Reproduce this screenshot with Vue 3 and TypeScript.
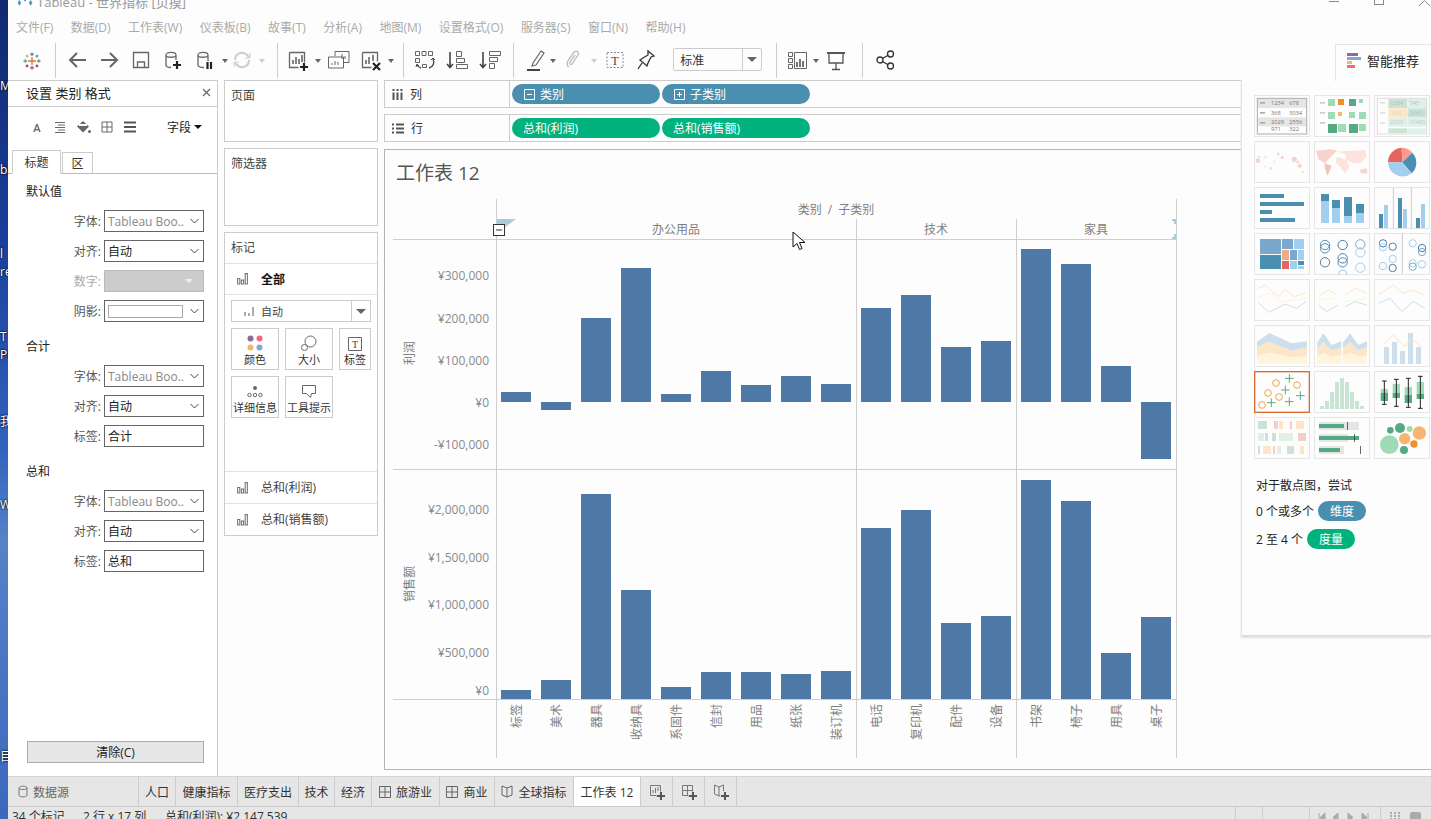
<script setup lang="ts">
type Shape = { tag: string; attrs: Record<string, string | number>; text?: string }
type Thumb = { x: number; y: number; shapes: Shape[]; selected?: boolean }

const r = (x: number, y: number, width: number, height: number, fill: string): Shape => ({ tag: 'rect', attrs: { x, y, width, height, fill } })
const c = (cx: number, cy: number, rad: number, fill: string, stroke = 'none', sw = 3): Shape => ({ tag: 'circle', attrs: { cx, cy, r: rad, fill, stroke, 'stroke-width': sw } })
const pl = (points: string, stroke: string, sw = 3): Shape => ({ tag: 'polyline', attrs: { points, fill: 'none', stroke, 'stroke-width': sw } })
const pg = (points: string, fill: string): Shape => ({ tag: 'polygon', attrs: { points, fill } })
const p = (d: string, fill: string): Shape => ({ tag: 'path', attrs: { d, fill } })
const tx = (x: number, y: number, text: string, fill: string): Shape => ({ tag: 'text', attrs: { x, y, fill, 'font-size': 17 }, text })
const ln = (x1: number, y1: number, x2: number, y2: number, stroke: string, sw = 3): Shape => ({ tag: 'line', attrs: { x1, y1, x2, y2, stroke, 'stroke-width': sw } })

const D = '#4b8fb0', L = '#a3cfef', M = '#7aa8cc', G = '#54ab83', LG = '#9fdcb5', PG = '#c9e3d5', PPG = '#dff0e6', PE = '#fde5c8', PK = '#f5cfc5', BL = '#cddfec', YL = '#fff4dc'
const plus = (x: number, y: number) => [ln(x - 13, y, x + 13, y, G), ln(x, y - 13, x, y + 13, G)]
const whisk = (x: number, t: number, b: number, bt: number, bm: number, bb: number) => [
  r(x - 11, bt, 22, bm - bt, LG), r(x - 11, bm, 22, bb - bm, G), ln(x, t, x, b, '#222'), ln(x - 7, t, x + 7, t, '#222'), ln(x - 7, b, x + 7, b, '#222')
]

const thumbs: Thumb[] = [
  { x: 72, y: 285, shapes: [r(84, 297, 144, 27, '#e5e5e5'), r(84, 352, 144, 27, '#e5e5e5'), r(90, 306, 15, 5, '#aaa'), r(90, 336, 15, 5, '#aaa'), r(90, 366, 15, 5, '#aaa'),
    tx(123, 316, '1234', '#777'), tx(178, 316, '678', '#777'), tx(123, 344, '368', '#777'), tx(178, 344, '3034', '#777'), tx(123, 372, '2029', '#777'), tx(178, 372, '2556', '#777'), tx(123, 394, '971', '#777'), tx(178, 394, '322', '#777'),
    { tag: 'rect', attrs: { x: 82, y: 295, width: 148, height: 107, fill: 'none', stroke: '#aaa', 'stroke-width': 3 } }] },
  { x: 252, y: 285, shapes: [r(270, 306, 15, 5, '#ccc'), r(270, 336, 15, 5, '#ccc'), r(270, 366, 15, 5, '#ccc'),
    r(294, 297, 21, 21, LG), r(324, 297, 18, 18, '#f28e2b'), r(357, 297, 21, 21, G), r(387, 297, 12, 12, LG),
    r(294, 336, 21, 21, LG), r(324, 336, 12, 12, '#f9b56f'), r(357, 336, 18, 18, LG), r(387, 336, 21, 21, LG),
    r(294, 372, 27, 27, G), r(324, 372, 24, 24, LG), r(357, 372, 27, 27, G), r(387, 372, 21, 21, LG)] },
  { x: 432, y: 285, shapes: [r(475, 297, 57, 27, PG), r(533, 297, 57, 27, PPG), r(475, 325, 57, 27, PE), r(533, 325, 57, 27, PG), r(475, 353, 57, 27, PPG), r(533, 353, 57, 27, PPG), r(475, 385, 57, 14, PG), r(533, 385, 57, 14, PPG),
    r(450, 306, 15, 5, '#e0e0e0'), r(450, 336, 15, 5, '#e0e0e0'), r(450, 366, 15, 5, '#e0e0e0'),
    tx(481, 316, '1234', '#bbb'), tx(539, 316, '345', '#bbd'), tx(486, 344, '345', '#ddb'), tx(539, 344, '2860', '#bbb'), tx(481, 372, '2020', '#bcd'), tx(537, 372, '10480', '#bcd'),
    { tag: 'rect', attrs: { x: 442, y: 295, width: 148, height: 107, fill: 'none', stroke: '#ddd', 'stroke-width': 3 } }] },
  { x: 72, y: 423, shapes: [c(84, 482, 7, '#f6d3cb'), c(87, 470, 3, '#f6d3cb'), c(107, 472, 4, '#f9e0da'), c(145, 462, 4, '#f6d3cb'), c(157, 472, 5, '#f6d3cb'), c(133, 485, 3, '#f9e0da'), c(193, 478, 8, '#f6d3cb'), c(203, 486, 4, '#f6d3cb'), c(209, 497, 6, '#f6d3cb'), c(105, 500, 3, '#f9e0da'), c(122, 505, 5, '#f9e0da'), c(218, 515, 3, '#f6d3cb')] },
  { x: 252, y: 423, shapes: [pg('258,452 300,448 322,452 302,470 285,490 265,478', '#f6d3cb'), pg('283,490 305,497 300,510 292,527 285,505', '#f2c4b8'), pg('320,455 405,450 410,470 390,490 370,490 350,480 345,462', '#fde2de'), pg('320,470 350,480 358,500 345,520 330,500 318,488', '#fde2de'), pg('390,510 410,505 412,520 392,520', '#f6d3cb')] },
  { x: 432, y: 423, shapes: [p('M517 487L474 487A44 44 0 0 1 515 443Z', '#e4655f'), p('M517 487L515 443A44 44 0 0 1 547 458Z', '#fb9a8f'), p('M517 487L547 458A44 44 0 0 1 545 520Z', D), p('M517 487L545 520A44 44 0 0 1 474 487Z', L)] },
  { x: 72, y: 561, shapes: [r(90, 582, 72, 12, D), r(90, 606, 132, 12, D), r(90, 630, 36, 12, D), r(90, 654, 105, 12, D)] },
  { x: 252, y: 561, shapes: [r(273, 582, 24, 21, D), r(273, 603, 24, 66, L), r(306, 600, 24, 24, D), r(306, 624, 24, 45, L), r(342, 591, 24, 57, D), r(342, 648, 24, 21, L), r(378, 612, 24, 27, D), r(378, 639, 24, 30, L)] },
  { x: 432, y: 561, shapes: [ln(490, 563, 490, 685, '#ccc'), ln(544, 563, 544, 685, '#ccc'), r(447, 642, 12, 42, D), r(462, 615, 12, 69, L), r(504, 594, 12, 90, D), r(519, 627, 12, 57, L), r(558, 654, 12, 30, D), r(573, 612, 12, 72, L)] },
  { x: 72, y: 699, shapes: [r(90, 717, 63, 45, M), r(90, 765, 63, 42, D), r(156, 717, 33, 30, M), r(192, 717, 30, 30, L), r(156, 750, 21, 30, '#eaab85'), r(156, 783, 21, 24, '#e4655f'), r(180, 750, 21, 30, M), r(204, 750, 18, 30, L), r(180, 783, 21, 24, L), r(204, 783, 18, 12, D), r(204, 798, 18, 9, L)] },
  { x: 252, y: 699, shapes: [c(285, 735, 14, 'none', '#5b8fb5'), c(285, 745, 14, 'none', '#5b8fb5'), c(285, 787, 14, 'none', '#4b7fa8'), c(338, 735, 14, 'none', '#4b7fa8'), c(338, 775, 14, 'none', '#4b7fa8'), c(338, 787, 14, 'none', '#5b8fb5'), c(338, 822, 12, 'none', L), c(391, 733, 14, 'none', M), c(391, 757, 14, 'none', L), c(391, 803, 14, 'none', L)] },
  { x: 432, y: 699, shapes: [ln(517, 701, 517, 821, '#ccc'), c(459, 730, 11, 'none', '#4b7fa8'), c(459, 742, 11, 'none', L), c(488, 740, 11, 'none', '#4b7fa8'), c(488, 777, 11, 'none', L), c(488, 804, 11, 'none', '#4b7fa8'), c(459, 798, 11, 'none', L), c(548, 730, 11, 'none', L), c(576, 744, 11, 'none', '#4b7fa8'), c(576, 756, 11, 'none', M), c(548, 790, 11, 'none', L), c(548, 800, 11, 'none', M), c(576, 793, 11, 'none', L)] },
  { x: 72, y: 837, shapes: [pl('85,865 105,855 145,890 165,870 195,890 228,878', PE), pl('85,890 125,880 150,905 190,900 228,895', YL), pl('85,908 117,937 165,912 200,925 228,905', BL)] },
  { x: 252, y: 837, shapes: [pl('265,890 295,870 320,885', PE), pl('345,885 375,865 410,880', PE), pl('265,900 310,895', YL), pl('345,905 410,895', YL), pl('265,915 290,935 325,915', BL), pl('345,920 375,905 410,915', BL)] },
  { x: 432, y: 837, shapes: [pl('445,885 490,855 520,880 550,870 580,885', PE), pl('445,910 480,895 515,935 550,905 585,925', BL)] },
  { x: 72, y: 75, shapes: [pg('81,192 231,192 231,168 185,172 118,158 81,168', YL), pg('81,140 118,125 185,152 231,142 231,168 185,172 118,158 81,168', PE), pg('81,125 118,99 185,130 231,124 231,142 185,152 118,125 81,140', BL)] },
  { x: 252, y: 75, shapes: [pg('262,192 334,192 334,165 305,170 280,158 262,168', YL), pg('262,145 280,125 305,152 334,142 334,165 305,170 280,158 262,168', PE), pg('262,128 280,100 305,135 334,124 334,142 305,152 280,125 262,145', BL),
    pg('339,192 411,192 411,165 385,170 360,158 339,168', YL), pg('339,145 360,125 385,152 411,142 411,165 385,170 360,158 339,168', PE), pg('339,128 360,100 385,135 411,124 411,142 385,152 360,125 339,145', BL)] },
  { x: 432, y: 75, shapes: [r(462, 141, 15, 51, BL), r(486, 126, 15, 66, BL), r(510, 153, 15, 39, BL), r(534, 99, 15, 93, BL), r(558, 141, 15, 51, BL), pl('462,130 490,105 525,140 545,115 575,140', PE)] },
  { x: 72, y: 213, selected: true, shapes: [c(138, 249, 10, 'none', '#f2a34a'), c(201, 255, 10, 'none', '#f2a34a'), c(114, 279, 10, 'none', '#f2a34a'), c(147, 291, 10, 'none', '#f2a34a'), c(96, 315, 10, 'none', '#f2a34a'), ...plus(178, 235), ...plus(166, 270), ...plus(211, 287), ...plus(124, 308), ...plus(178, 305)] },
  { x: 252, y: 213, shapes: [r(270, 318, 12, 9, PG), r(285, 303, 12, 24, PG), r(300, 276, 12, 51, PG), r(315, 246, 12, 81, PG), r(330, 234, 12, 93, PG), r(345, 246, 12, 81, PG), r(360, 276, 12, 51, PG), r(375, 303, 12, 24, PG), r(390, 318, 12, 9, PG)] },
  { x: 432, y: 213, shapes: [...whisk(463, 243, 313, 267, 279, 303), ...whisk(499, 238, 319, 252, 279, 294), ...whisk(535, 235, 322, 261, 285, 309), ...whisk(571, 229, 325, 246, 282, 297)] },
  { x: 72, y: 351, shapes: [r(84, 363, 27, 24, PG), r(132, 363, 12, 24, PK), r(147, 363, 12, 24, PE), r(180, 363, 6, 24, PK), r(198, 363, 24, 24, PE), r(84, 399, 18, 24, PPG), r(105, 399, 9, 24, PG), r(126, 399, 12, 24, PG), r(147, 399, 42, 24, PPG), r(204, 399, 24, 24, PK), r(84, 438, 6, 24, PG), r(99, 438, 24, 24, PE), r(129, 438, 6, 24, PK), r(141, 438, 12, 24, PPG), r(171, 438, 21, 24, PG), r(210, 438, 12, 24, PE)] },
  { x: 252, y: 351, shapes: [r(267, 366, 120, 24, '#e5e5e5'), r(267, 372, 75, 12, G), r(352, 366, 2, 24, '#222'), r(267, 402, 87, 24, '#e5e5e5'), r(267, 408, 120, 12, G), r(373, 402, 2, 24, '#222'), r(267, 438, 75, 24, '#e5e5e5'), r(267, 444, 63, 12, G), r(391, 438, 2, 24, '#222')] },
  { x: 432, y: 351, shapes: [c(478, 434, 28, LG), c(481, 391, 10, G), c(510, 384, 15, G), c(539, 387, 9, LG), c(568, 399, 20, '#f9b56f'), c(524, 416, 17, '#f9b56f'), c(552, 432, 11, '#f28e2b'), c(522, 450, 12, G)] }
]

const menus = ['文件(F)', '数据(D)', '工作表(W)', '仪表板(B)', '故事(T)', '分析(A)', '地图(M)', '设置格式(O)', '服务器(S)', '窗口(N)', '帮助(H)']
const desktop = [
  { t: 'M', y: 78 }, { t: 'b', y: 162 }, { t: 'l', y: 246 }, { t: 're', y: 264 }, { t: 'T', y: 329 }, { t: 'Pr', y: 347 }, { t: '我', y: 414 }, { t: 'W', y: 497 }, { t: '目', y: 749 }
]

type Row = { label: string; value: string; kind: 'font' | 'sel' | 'off' | 'shade' | 'input' }
const sections: { title: string; rows: Row[] }[] = [
  { title: '默认值', rows: [{ label: '字体:', value: 'Tableau Boo..', kind: 'font' }, { label: '对齐:', value: '自动', kind: 'sel' }, { label: '数字:', value: '', kind: 'off' }, { label: '阴影:', value: '', kind: 'shade' }] },
  { title: '合计', rows: [{ label: '字体:', value: 'Tableau Boo..', kind: 'font' }, { label: '对齐:', value: '自动', kind: 'sel' }, { label: '标签:', value: '合计', kind: 'input' }] },
  { title: '总和', rows: [{ label: '字体:', value: 'Tableau Boo..', kind: 'font' }, { label: '对齐:', value: '自动', kind: 'sel' }, { label: '标签:', value: '总和', kind: 'input' }] }
]

const names = ['标签', '美术', '器具', '收纳具', '系固件', '信封', '用品', '纸张', '装订机', '电话', '复印机', '配件', '设备', '书架', '椅子', '用具', '桌子']
const xs = names.map((_, i) => 501 + 40 * i)
const profitTops = [392, 410, 318, 268, 394, 371, 385, 376, 384, 308, 295, 347, 341, 249, 264, 366, 459]
const salesTops = [690, 680, 494, 590, 687, 672, 672, 674, 671, 528, 510, 623, 616, 480, 501, 653, 617]
const barsOf = (tops: number[], zero: number) => tops.map((t, i) => ({ x: xs[i], y: Math.min(t, zero), h: Math.abs(t - zero) }))
const bars = [...barsOf(profitTops, 402), ...barsOf(salesTops, 699)]
const ticks = [
  { t: '¥300,000', y: 280 }, { t: '¥200,000', y: 323 }, { t: '¥100,000', y: 365 }, { t: '¥0', y: 407 }, { t: '-¥100,000', y: 449 },
  { t: '¥2,000,000', y: 514 }, { t: '¥1,500,000', y: 562 }, { t: '¥1,000,000', y: 609 }, { t: '¥500,000', y: 657 }, { t: '¥0', y: 695 }
]

const tabs = [
  { t: '数据源', w: 131, icon: 'db' }, { t: '人口', w: 37 }, { t: '健康指标', w: 62 }, { t: '医疗支出', w: 61 }, { t: '技术', w: 36 }, { t: '经济', w: 37 },
  { t: '旅游业', w: 68, icon: 'grid' }, { t: '商业', w: 55, icon: 'grid' }, { t: '全球指标', w: 79, icon: 'book' }, { t: '工作表 12', w: 67, active: true },
  { t: '', w: 32, icon: 'newsheet' }, { t: '', w: 32, icon: 'newdash' }, { t: '', w: 32, icon: 'newstory' }
]
</script>

<template>
  <div class="screen">
    <div class="desktop">
      <span v-for="d in desktop" :key="d.y" class="desk-label" :style="{ top: d.y + 'px' }">{{ d.t }}</span>
    </div>

    <div class="app">
      <header class="titlebar">
        <svg class="title-logo" width="16" height="16" viewBox="0 0 20 20"><g stroke="#4b8fb0" stroke-width="2"><path d="M10 1v8M6 5h8M3 8v6M1 11h4M17 8v6M15 11h4" /></g></svg>
        <span class="title-text">Tableau - 世界指标 [页摸]</span>
        <div class="win-ctl">
          <i class="win-min"></i><i class="win-max"></i>
          <svg width="11" height="7" viewBox="0 0 11 7"><path d="M0 6L5.500 0.500L11 6" fill="none" stroke="#888" /></svg>
        </div>
      </header>

      <nav class="menubar"><span v-for="m in menus" :key="m">{{ m }}</span></nav>

      <div class="toolbar">
        <div class="tg tg-logo">
          <svg width="18" height="18" viewBox="0 0 20 20" fill="none" stroke-width="1.500">
            <path d="M10 5.500v9M5.500 10h9" stroke="#e8762c" stroke-width="1.600" />
            <path d="M10 .5v4M8 2.500h4" stroke="#5b8fb5" /><path d="M10 15.500v4M8 17.500h4" stroke="#7b6a9b" />
            <path d="M2.500 8v4M.5 10h4" stroke="#59a5b5" /><path d="M17.500 8v4M15.500 10h4" stroke="#8a8a8a" />
            <path d="M4.500 3v3M3 4.500h3" stroke="#e8a04c" /><path d="M15.500 3v3M14 4.500h3" stroke="#4b8fb0" />
            <path d="M4.500 14v3M3 15.500h3" stroke="#c8323c" /><path d="M15.500 14v3M14 15.500h3" stroke="#6c5b7b" />
          </svg>
        </div>
        <div class="tg tg-a">
          <svg class="i" viewBox="0 0 24 24"><path d="M20 12H5M11 5l-7 7 7 7" fill="none" stroke="#666" stroke-width="2" /></svg>
          <svg class="i" viewBox="0 0 24 24"><path d="M4 12h15M13 5l7 7-7 7" fill="none" stroke="#666" stroke-width="2" /></svg>
          <svg class="i" viewBox="0 0 24 24"><path d="M4.500 4.500h15v15h-15zM8.500 19v-5h7v5" fill="none" stroke="#666" stroke-width="1.300" /></svg>
          <svg class="i" viewBox="0 0 24 24"><path d="M6 7c0-3.500 10-3.500 10 0v5M6 7c0 3 10 3 10 0M6 7v10c0 1.500 2 2.500 5 2.500" fill="none" stroke="#666" stroke-width="1.300" /><path d="M17 13v8M13 17h8" stroke="#222" stroke-width="2.200" /></svg>
          <svg class="i" viewBox="0 0 24 24"><path d="M6 7c0-3.500 10-3.500 10 0v6M6 7c0 3 10 3 10 0M6 7v10c0 1.500 2 2.500 6 2.500" fill="none" stroke="#666" stroke-width="1.300" /><path d="M15.500 14v7M19 14v7" stroke="#222" stroke-width="2.200" /></svg>
          <i class="caret"></i>
          <svg class="i tight" viewBox="0 0 24 24"><path d="M5 12a7 7 0 0 1 12-5l2 2M19 12a7 7 0 0 1-12 5l-2-2" fill="none" stroke="#ccc" stroke-width="2" /><path d="M20 5v5h-5M4 19v-5h5" fill="none" stroke="#ccc" /></svg>
          <i class="caret faint"></i>
        </div>
        <div class="tg tg-b">
          <svg class="i" viewBox="0 0 24 24"><path d="M4.500 4.500h15v10M4.500 4.500v15h9" fill="none" stroke="#666" stroke-width="1.300" /><path d="M8 16v-4M11 16v-7M14 16v-5M17 14V7" stroke="#666" stroke-width="1.600" /><path d="M19 15v8M15 19h8" stroke="#222" stroke-width="2.200" /></svg>
          <i class="caret"></i>
          <svg class="i" viewBox="0 0 24 24"><path d="M9 8V3.500h14v11h-5" fill="none" stroke="#666" /><path d="M2.500 9h15v11h-15z" fill="#fff" stroke="#666" /><path d="M6 17v-2M9 17v-4M12 17v-3M16 11V6M19 11V8" stroke="#666" /></svg>
          <svg class="i" viewBox="0 0 24 24"><path d="M4.500 4.500h15v9M4.500 4.500v15h9" fill="none" stroke="#666" stroke-width="1.300" /><path d="M8 16v-4M11 16V9M15 13V7" stroke="#666" stroke-width="1.600" /><path d="M15 15l7 7M22 15l-7 7" stroke="#222" stroke-width="2.200" /></svg>
          <i class="caret"></i>
        </div>
        <div class="tg tg-c">
          <svg class="i" viewBox="0 0 24 24"><path d="M2.500 3.500h4v4h-4zM9 3.500h4v4H9zM15.500 3.500h4v4h-4zM2.500 10.500h4v4h-4zM9.500 19.500h4v-3h-4z" fill="none" stroke="#666" /><path d="M20 11c2 4 0 8-4 9M8 20c-2-.5-3-1.500-4-3" fill="none" stroke="#444" stroke-width="1.300" /><path d="M18 12l2-2 2 2M6 18l-2-2-1 3" fill="none" stroke="#444" /></svg>
          <svg class="i" viewBox="0 0 24 24"><path d="M5 4v15M2 16l3 3.500L8 16" fill="none" stroke="#444" stroke-width="1.600" /><path d="M11.500 3.500h5v5h-5zM11.500 10.500h8v4h-8zM11.500 16.500h11v4h-11z" fill="none" stroke="#666" /></svg>
          <svg class="i" viewBox="0 0 24 24"><path d="M5 4v15M2 16l3 3.500L8 16" fill="none" stroke="#444" stroke-width="1.600" /><path d="M11.500 3.500h11v4h-11zM11.500 9.500h8v4h-8zM11.500 15.500h5v5h-5z" fill="none" stroke="#666" /></svg>
        </div>
        <div class="tg tg-d">
          <svg class="i" viewBox="0 0 24 24"><path d="M10 15l8-12 3 2-8 12-4 1z" fill="none" stroke="#666" stroke-width="1.200" /><path d="M4 22h13" stroke="#444" stroke-width="2" /></svg>
          <i class="caret pull"></i>
          <svg class="i" viewBox="0 0 24 24"><path d="M8 19c-3-2-2-5 0-8l5-7c2-2 6 0 4 3l-6 9c-1 1-3 0-2-2l5-7" fill="none" stroke="#bbb" stroke-width="1.300" /></svg>
          <i class="caret faint"></i>
          <svg class="i" viewBox="0 0 24 24"><path d="M4 4.500h16v15H4z" fill="none" stroke="#888" stroke-dasharray="2 1.500" /><text x="12" y="16.500" text-anchor="middle" font-size="12" font-family="Liberation Serif, serif" fill="#444">T</text></svg>
          <svg class="i i-pin" viewBox="0 0 24 24"><path d="M14 3l6 5-3 1-3 6-1 3-7-6 3-2 5-3zM8 15l-4 6" fill="none" stroke="#333" stroke-width="1.300" /></svg>
          <div class="tsel"><span>标准</span><b><i class="caret big"></i></b></div>
        </div>
        <div class="tg tg-e">
          <svg class="i" viewBox="0 0 24 24"><path d="M2.500 4.500h4v4h-4zM2.500 10.500h4v4h-4zM2.500 16.500h4v4h-4zM8.500 4.500h12v16h-12z" fill="none" stroke="#666" /><path d="M11 19v-5M14 19v-8M17 19v-6" stroke="#666" stroke-width="1.800" /></svg>
          <i class="caret pull"></i>
          <svg class="i" viewBox="0 0 24 24"><path d="M3 5h18M5 5v10h14V5M12 15v6M8 21.500h8" fill="none" stroke="#555" stroke-width="1.300" /><path d="M3 5h18" stroke="#555" stroke-width="2" /></svg>
        </div>
        <div class="tg tg-f">
          <svg class="i" viewBox="0 0 24 24"><path d="M9.500 10.500l6-3.500M9.500 13.500l6 3.500" stroke="#333" stroke-width="1.300" /><circle cx="7" cy="12" r="3" fill="none" stroke="#333" stroke-width="1.300" /><circle cx="17.500" cy="6" r="3" fill="none" stroke="#333" stroke-width="1.300" /><circle cx="17.500" cy="18" r="3" fill="none" stroke="#333" stroke-width="1.300" /></svg>
        </div>
      </div>

      <main class="main">
        <aside class="format">
          <div class="fmt-head">
            <span>设置 类别 格式</span>
            <svg width="9" height="9" viewBox="0 0 9 9"><path d="M1 1l7 7M8 1l-7 7" stroke="#666" stroke-width="1.200" /></svg>
          </div>
          <div class="fmt-icons">
            <span class="fmt-a">A</span>
            <svg width="14" height="14" viewBox="0 0 14 14"><path d="M2 2.500h10M5 5h7M2 7.500h10M5 10h7M2 12.500h10" stroke="#666" /></svg>
            <svg width="15" height="14" viewBox="0 0 15 14"><path d="M1 6.500l6-5.500 6 5.500-6 6z" fill="#666" /><path d="M3 5h8" stroke="#fff" stroke-width="2" /><circle cx="13.500" cy="11.500" r="1.500" fill="#666" /></svg>
            <svg width="14" height="14" viewBox="0 0 14 14"><path d="M2 2h10v10H2zM7 2v10M2 7h10" fill="none" stroke="#666" /></svg>
            <svg width="14" height="14" viewBox="0 0 14 14"><path d="M1 2.500h12M1 7h12M1 11.500h12" stroke="#555" stroke-width="2" /></svg>
            <span class="fmt-field">字段<i class="caret dark"></i></span>
          </div>
          <div class="fmt-tabs"><span class="ft on">标题</span><span class="ft">区</span></div>
          <section v-for="s in sections" :key="s.title" class="fmt-sec">
            <h4>{{ s.title }}</h4>
            <div v-for="row in s.rows" :key="row.label" class="fmt-row">
              <label :class="{ dim: row.kind === 'off' }">{{ row.label }}</label>
              <div class="ctl" :class="row.kind">
                <span class="ctl-val">{{ row.value }}</span>
                <i v-if="row.kind === 'shade'" class="shade-box"></i>
                <svg v-if="row.kind === 'font' || row.kind === 'sel' || row.kind === 'shade'" width="9" height="6" viewBox="0 0 9 6"><path d="M.5 1l4 4 4-4" fill="none" stroke="#444" /></svg>
                <i v-if="row.kind === 'off'" class="caret white"></i>
              </div>
            </div>
          </section>
          <button class="clear">清除(C)</button>
        </aside>

        <div class="cards">
          <div class="card card-page"><span class="card-title">页面</span></div>
          <div class="card card-filter"><span class="card-title">筛选器</span></div>
          <div class="card card-marks">
            <div class="marks-title"><span class="card-title">标记</span></div>
            <div class="mark-row strong">
              <svg class="mi" viewBox="0 0 12 12"><path d="M1.500 6h2v5h-2zM5 7.500h2V11H5zM8.500 1.500h2V11h-2z" fill="none" stroke="#777" /></svg>全部
            </div>
            <div class="mark-body">
              <div class="mark-sel">
                <svg class="mi small" viewBox="0 0 12 12"><path d="M1 7h2v4H1zM5 8h2v3H5zM9 2h2v9H9z" fill="#aaa" /></svg>
                <span>自动</span><b><i class="caret big"></i></b>
              </div>
              <div class="mark-btns">
                <div class="mb"><svg width="16" height="16" viewBox="0 0 16 16"><circle cx="3.500" cy="3.500" r="3" fill="#8f6a9a" /><circle cx="12.500" cy="3.500" r="3" fill="#f2697c" /><circle cx="3.500" cy="12.500" r="3" fill="#f5b56b" /><circle cx="12.500" cy="12.500" r="3" fill="#7fa8d8" /></svg>颜色</div>
                <div class="mb"><svg width="16" height="16" viewBox="0 0 16 16"><circle cx="9.500" cy="6.500" r="5.500" fill="none" stroke="#666" /><circle cx="3.500" cy="12.500" r="3" fill="#fff" stroke="#666" /></svg>大小</div>
                <div class="mb"><svg width="14" height="14" viewBox="0 0 14 14"><path d="M.5.5h13v13H.5z" fill="none" stroke="#666" /><text x="7" y="10.500" text-anchor="middle" font-size="10" font-family="Liberation Serif, serif" fill="#444">T</text></svg>标签</div>
                <div class="mb"><svg width="16" height="16" viewBox="0 0 16 16"><circle cx="8" cy="5" r="2" fill="#666" /><circle cx="2.500" cy="12" r="1.700" fill="none" stroke="#666" /><circle cx="8" cy="12" r="1.700" fill="none" stroke="#666" /><circle cx="13.500" cy="12" r="1.700" fill="none" stroke="#666" /></svg>详细信息</div>
                <div class="mb"><svg width="16" height="16" viewBox="0 0 16 16"><path d="M1.500 2.500h13v8h-4l-1 4-4-4h-4z" fill="none" stroke="#666" /></svg>工具提示</div>
              </div>
            </div>
            <div class="mark-row bt">
              <svg class="mi" viewBox="0 0 12 12"><path d="M1.500 6h2v5h-2zM5 7.500h2V11H5zM8.500 1.500h2V11h-2z" fill="none" stroke="#777" /></svg>总和(利润)
            </div>
            <div class="mark-row bt">
              <svg class="mi" viewBox="0 0 12 12"><path d="M1.500 6h2v5h-2zM5 7.500h2V11H5zM8.500 1.500h2V11h-2z" fill="none" stroke="#777" /></svg>总和(销售额)
            </div>
          </div>
        </div>

        <div class="work">
          <div class="shelf">
            <div class="shelf-label">
              <svg width="11" height="12" viewBox="0 0 11 12"><path d="M1.500 1v2M5.500 1v2M9.500 1v2" stroke="#555" stroke-width="2" /><path d="M1.500 4.500V12M5.500 4.500V12M9.500 4.500V12" stroke="#555" stroke-width="2" /></svg>列
            </div>
            <span class="pill blue"><svg width="11" height="11" viewBox="0 0 11 11"><path d="M.5.500h10v10H.5zM3 5.500h5" fill="none" stroke="#fff" /></svg>类别</span>
            <span class="pill blue"><svg width="11" height="11" viewBox="0 0 11 11"><path d="M.5.500h10v10H.5zM3 5.500h5M5.500 3v5" fill="none" stroke="#fff" /></svg>子类别</span>
          </div>
          <div class="shelf">
            <div class="shelf-label">
              <svg width="12" height="11" viewBox="0 0 12 11"><path d="M0 1.500h2M4 1.500h8M0 5.500h2M4 5.500h8M0 9.500h2M4 9.500h8" stroke="#555" stroke-width="2" /></svg>行
            </div>
            <span class="pill green">总和(利润)</span>
            <span class="pill green">总和(销售额)</span>
          </div>

          <div class="sheet">
            <h1 class="sheet-title">工作表 12</h1>
            <svg class="chart" width="800" height="570" viewBox="385 195 800 570">
              <g stroke="#cfcfcf" fill="none">
                <path d="M393 239.500H1176M393 469.500H1176M393 699.500H1176" />
                <path d="M496.500 199V758M1176.500 199V758M856.500 219V758M1016.500 219V758" />
              </g>
              <polygon points="497,219 516,219 497,233" fill="#a9cbe0" />
              <rect x="493.500" y="224.500" width="11" height="11" fill="#fff" stroke="#333" />
              <path d="M496 230h6" stroke="#333" />
              <path d="M1172 219h4v5h-2v-3h-2zM1176 239h-4v-2h2v-3h2z" fill="#a9cbe0" />
              <rect v-for="(b, i) in bars" :key="i" :x="b.x" :y="b.y" width="30" :height="b.h" fill="#4e79a7" />
              <g class="axis-hdr" text-anchor="middle">
                <text x="836" y="214" word-spacing="3">类别 / 子类别</text>
                <text x="676" y="234">办公用品</text>
                <text x="936" y="234">技术</text>
                <text x="1096" y="234">家具</text>
              </g>
              <text v-for="t in ticks" :key="t.y" class="tick" x="489" :y="t.y" text-anchor="end">{{ t.t }}</text>
              <text class="axis-hdr" transform="translate(414 353) rotate(-90)" text-anchor="middle">利润</text>
              <text class="axis-hdr" transform="translate(414 584) rotate(-90)" text-anchor="middle">销售额</text>
              <text v-for="(n, i) in names" :key="n" class="axis-hdr" :transform="`translate(${xs[i] + 20} 704) rotate(-90)`" text-anchor="end">{{ n }}</text>
            </svg>
          </div>
        </div>
      </main>

      <div class="tabs">
        <div v-for="t in tabs" :key="t.t + t.icon" class="tab" :class="{ active: t.active, first: t.icon === 'db' }" :style="{ width: t.w + 'px' }">
          <svg v-if="t.icon === 'db'" width="10" height="13" viewBox="0 0 10 13"><path d="M1 3c0-2.500 8-2.500 8 0v7c0 2.500-8 2.500-8 0zM1 3c0 2 8 2 8 0" fill="none" stroke="#777" /></svg>
          <svg v-if="t.icon === 'grid'" width="12" height="12" viewBox="0 0 12 12"><path d="M.5.500h11v11H.5zM6 .5v11M.5 6h11" fill="none" stroke="#666" /></svg>
          <svg v-if="t.icon === 'book'" width="12" height="13" viewBox="0 0 12 13"><path d="M6 3L1 1v9l5 2 5-2V1zM6 3v9" fill="none" stroke="#666" /></svg>
          <svg v-if="t.icon === 'newsheet'" width="16" height="16" viewBox="0 0 16 16"><path d="M1.500 1.500h10v6M1.500 1.500v10h6" fill="none" stroke="#777" /><path d="M4 9V6M6.500 9V4M9 7V3" stroke="#777" /><path d="M12 8v8M8 12h8" stroke="#555" stroke-width="2" /></svg>
          <svg v-if="t.icon === 'newdash'" width="16" height="16" viewBox="0 0 16 16"><path d="M1.500 1.500h10v6M1.500 1.500v10h6M6.500 1.500v10M1.500 6.500h10" fill="none" stroke="#777" /><path d="M12 8v8M8 12h8" stroke="#555" stroke-width="2" /></svg>
          <svg v-if="t.icon === 'newstory'" width="16" height="16" viewBox="0 0 16 16"><path d="M6 3L1.500 1v9L6 12l1-.5M6 3l4.500-2v6M6 3v9" fill="none" stroke="#777" /><path d="M12 8v8M8 12h8" stroke="#555" stroke-width="2" /></svg>
          <span v-if="t.t">{{ t.t }}</span>
        </div>
      </div>

      <footer class="status">
        <span class="s1">34 个标记</span><span class="s2">2 行 x 17 列</span><span class="s3">总和(利润): ¥2,147,539</span>
        <div class="status-right">
          <i class="sd"></i><i class="sd gap1"></i><i class="sd gap2"></i>
          <svg class="status-nav" width="56" height="10" viewBox="0 0 56 10"><path d="M1 3v9M7 3L2 7.500 7 12zM20 3l-5 4.500 5 4.500zM30 3l5 4.500-5 4.500zM44 3l5 4.500-5 4.500zM50 3v9" fill="#aaa" stroke="#aaa" /></svg>
          <i class="sd gap3"></i>
          <svg class="status-grid" width="40" height="10" viewBox="0 0 40 10"><path d="M1 3h10M1 6h10M1 9h10" stroke="#aaa" stroke-width="2" stroke-dasharray="2 2" /><rect x="21" y="2" width="11" height="8" rx="2" fill="#aaa" /></svg>
        </div>
      </footer>
    </div>

    <div class="smart-tab">
      <svg width="14" height="15" viewBox="0 0 14 15"><rect y="0" width="11" height="3" fill="#8f6a9a" /><rect y="4" width="14" height="3" fill="#7fa8d8" /><rect y="8" width="5" height="3" fill="#f5b56b" /><rect y="12" width="8" height="3" fill="#f2697c" /></svg>
      <span>智能推荐</span>
    </div>
    <aside class="smart">
      <div class="thumbs">
        <svg v-for="(t, i) in thumbs" :key="i" class="thumb" width="56" height="42" :viewBox="`${t.x} ${t.y} 168 126`">
          <rect :x="t.x + 1.5" :y="t.y + 1.5" width="165" height="123" fill="#fdfdfd" stroke="#e6e6e6" stroke-width="3" />
          <component :is="s.tag" v-for="(s, j) in t.shapes" :key="j" v-bind="s.attrs">{{ s.text }}</component>
          <rect v-if="t.selected" :x="t.x + 2" :y="t.y + 2" width="164" height="122" fill="none" stroke="#d86a32" stroke-width="4" />
        </svg>
      </div>
      <p class="hint h1">对于散点图，尝试</p>
      <p class="hint h2">0 个或多个<span class="tag blue">维度</span></p>
      <p class="hint h3">2 至 4 个<span class="tag green">度量</span></p>
    </aside>

    <svg class="cursor" width="14" height="20" viewBox="0 0 14 20"><path d="M1 1v15l4-3.500 2.500 6 2.500-1-2.500-6H13z" fill="#fff" stroke="#111" /></svg>
  </div>
</template>

<style scoped>
.screen {
  position: relative;
  display: flex;
  width: 1431px;
  height: 819px;
  overflow: hidden;
  font-family: "Open Sans", "Noto Sans CJK SC", sans-serif;
  font-size: 12px;
  color: #333;
  background: #fdfdfd;
}
.desktop {
  position: relative;
  flex: 0 0 8px;
  overflow: hidden;
  background: linear-gradient(180deg, #10296f 0%, #1a3f9c 30%, #3264bd 55%, #5682c8 66%, #3a68bd 100%);
}
.desk-label {
  position: absolute;
  left: 0;
  color: #fff;
  font-size: 12px;
  line-height: 16px;
  white-space: nowrap;
  text-shadow: 0 0 2px #000, 0 0 2px #000;
}
.app {
  flex: 1;
  min-width: 0;
  display: flex;
  flex-direction: column;
}
.titlebar {
  flex: 0 0 12px;
  display: flex;
  align-items: flex-end;
  overflow: hidden;
  padding-left: 9px;
}
.title-logo { margin-bottom: 2px; }
.title-text {
  margin-left: 4px;
  font-size: 13px;
  line-height: 20px;
  color: #999;
}
.win-ctl {
  position: absolute;
  top: 0;
  right: 1px;
  display: flex;
  align-items: flex-start;
  gap: 35px;
}
.win-min { width: 10px; height: 1px; margin-top: 1px; background: #888; }
.win-max { width: 10px; height: 5px; border: 1px solid #888; border-top: 0; box-sizing: border-box; }
.menubar {
  flex: 0 0 30px;
  display: flex;
  align-items: center;
  gap: 17.5px;
  padding-left: 8px;
  color: #aaa;
  white-space: nowrap;
}
.toolbar {
  flex: 0 0 38px;
  display: flex;
  align-items: center;
}
.tg {
  height: 35px;
  margin-bottom: 1px;
  display: flex;
  align-items: center;
  border-right: 1px solid #ccc;
  box-sizing: border-box;
}
.tg-logo { width: 48px; justify-content: center; }
.tg-a { width: 222px; padding-left: 6px; }
.tg-b { width: 126px; padding-left: 3px; }
.tg-c { width: 110px; padding-left: 5px; gap: 1px; }
.tg-d { width: 263px; padding-left: 5px; }
.tg-e { width: 86px; padding-left: 5px; }
.tg-f { border: 0; padding-left: 6px; }
.i { width: 24px; height: 24px; margin: -2px 3.750px 0; flex: none; }
.i.tight { margin-left: 0; }
.i-pin { margin-right: 15px; }
.caret {
  display: inline-block;
  flex: none;
  width: 0;
  height: 0;
  margin: 0 2px;
  border-left: 3.5px solid transparent;
  border-right: 3.5px solid transparent;
  border-top: 4px solid #666;
}
.caret.pull { margin-left: -1px; }
.caret.faint { border-top-color: #ccc; }
.caret.big { border-left-width: 5px; border-right-width: 5px; border-top-width: 5px; border-top-color: #666; margin: 0; }
.caret.dark { border-top-color: #111; margin-left: 3px; border-left-width: 4px; border-right-width: 4px; }
.caret.white { border-top-color: #eee; border-left-width: 4px; border-right-width: 4px; margin-left: auto; margin-right: 6px; }
.tsel {
  flex: none;
  display: flex;
  width: 89px;
  height: 23px;
  margin-top: -2px;
  box-sizing: border-box;
  border: 1px solid #ccc;
  border-radius: 2px;
  align-items: center;
  color: #333;
}
.tsel span { flex: 1; padding-left: 6px; }
.tsel b { width: 18px; height: 100%; border-left: 1px solid #ccc; display: flex; align-items: center; justify-content: center; }
.main {
  flex: 1;
  min-height: 0;
  display: flex;
}
.format {
  width: 210px;
  box-sizing: border-box;
  display: flex;
  flex-direction: column;
  border-top: 1px solid #ccc;
  border-right: 1px solid #ccc;
  background: #fff;
}
.fmt-head {
  flex: 0 0 26px;
  box-sizing: border-box;
  display: flex;
  align-items: center;
  justify-content: space-between;
  padding: 0 6px 2px 18px;
  border-bottom: 1px solid #ccc;
  font-size: 13px;
  color: #222;
}
.fmt-icons {
  flex: 0 0 43px;
  box-sizing: border-box;
  display: flex;
  align-items: center;
  gap: 9px;
  padding: 0 0 3px 22px;
  color: #666;
}
.fmt-a { width: 14px; text-align: center; font-weight: 600; font-size: 11px; }
.fmt-field { margin-left: 21px; color: #222; display: flex; align-items: center; }
.fmt-tabs {
  flex: 0 0 24px;
  display: flex;
  align-items: flex-end;
  gap: 1px;
  padding-left: 4px;
  box-sizing: border-box;
  border-bottom: 1px solid #bbb;
}
.ft {
  width: 31px;
  height: 22px;
  box-sizing: border-box;
  margin-bottom: -1px;
  border: 1px solid #ccc;
  border-bottom: 1px solid #bbb;
  display: flex;
  align-items: center;
  justify-content: center;
  color: #333;
}
.ft.on { width: 49px; height: 24px; border-bottom-color: #fff; }
.fmt-sec { padding-top: 14px; }
.fmt-tabs + .fmt-sec { padding-top: 7px; }
.fmt-sec h4 {
  margin: 0 0 9px 18px;
  height: 20px;
  line-height: 22px;
  font-size: 12px;
  font-weight: 400;
  color: #222;
}
.fmt-row {
  display: flex;
  align-items: center;
  height: 22px;
  margin-bottom: 8px;
}
.fmt-row:last-child { margin-bottom: 0; }
.fmt-row label {
  width: 93px;
  text-align: right;
  color: #555;
}
.fmt-row label.dim { color: #aaa; }
.ctl {
  margin-left: 3px;
  width: 100px;
  height: 22px;
  box-sizing: border-box;
  border: 1px solid #666;
  display: flex;
  align-items: center;
  padding: 0 4px 0 3px;
  color: #222;
  background: #fff;
  white-space: nowrap;
}
.ctl-val { flex: 1; }
.ctl.shade .ctl-val { display: none; }
.ctl.off { background: #ccc; border-color: #bbb; }
.ctl.font .ctl-val { color: #888; font-size: 12px; }
.shade-box { width: 76px; height: 13px; box-sizing: border-box; border: 1px solid #aaa; margin-right: 7px; }
.clear {
  margin: auto 13px 13px 19px;
  height: 22px;
  padding: 0;
  border: 1px solid #aaa;
  background: #e6e6e6;
  font: inherit;
  color: #222;
}
.cards {
  width: 154px;
  margin-left: 6px;
  display: flex;
  flex-direction: column;
  gap: 6px;
}
.card {
  box-sizing: border-box;
  border: 1px solid #ccc;
  background: #fff;
  display: flex;
  flex-direction: column;
}
.card-title { display: block; padding: 6px; line-height: 18px; color: #444; }
.card-page { height: 62px; }
.card-filter { height: 78px; }
.card-marks { height: 304px; }
.marks-title { height: 31px; border-bottom: 1px solid #e2e2e2; box-sizing: border-box; }
.mark-row {
  flex: 0 0 32px;
  box-sizing: border-box;
  display: flex;
  align-items: center;
  padding-left: 11px;
  padding-bottom: 1px;
  color: #444;
}
.mark-row.strong { font-weight: 700; color: #111; border-bottom: 1px solid #e2e2e2; flex-basis: 31px; }
.mark-row.bt { border-top: 1px solid #e2e2e2; }
.mi { width: 13px; height: 13px; margin-right: 12px; flex: none; }
.mi.small { width: 12px; height: 12px; margin: 0 6px 0 11px; }
.mark-body { flex: 1; padding: 5px 6px; }
.mark-sel {
  height: 22px;
  box-sizing: border-box;
  border: 1px solid #ccc;
  display: flex;
  align-items: center;
  color: #444;
  font-size: 11px;
}
.mark-sel span { flex: 1; }
.mark-sel b { width: 18px; height: 100%; border-left: 1px solid #ccc; display: flex; align-items: center; justify-content: center; }
.mark-btns {
  display: grid;
  grid-template-columns: 48px 48px 32px;
  grid-auto-rows: 42px;
  gap: 6px;
  margin-top: 6px;
}
.mb {
  box-sizing: border-box;
  border: 1px solid #ccc;
  display: flex;
  flex-direction: column;
  align-items: center;
  justify-content: flex-end;
  gap: 1px;
  font-size: 11px;
  line-height: 16px;
  padding-bottom: 1px;
  color: #333;
  white-space: nowrap;
}
.work {
  flex: 1;
  min-width: 0;
  margin-left: 6px;
  display: flex;
  flex-direction: column;
  gap: 6px;
}
.shelf {
  height: 28px;
  box-sizing: border-box;
  display: flex;
  align-items: center;
  gap: 2px;
  border: 1px solid #ccc;
  border-right: 0;
  background: #fdfdfd;
}
.shelf-label {
  width: 125px;
  height: 100%;
  box-sizing: border-box;
  border-right: 1px solid #ccc;
  display: flex;
  align-items: center;
  gap: 7px;
  padding-left: 7px;
  color: #333;
}
.pill {
  width: 148px;
  height: 20px;
  box-sizing: border-box;
  border-radius: 10px;
  display: flex;
  align-items: center;
  gap: 5px;
  color: #fff;
  white-space: nowrap;
}
.pill svg { margin-left: 12px; }
.pill.blue { background: #4b8fb0; }
.pill.green { background: #00b27d; padding-left: 11px; }
.sheet {
  flex: 1;
  min-height: 0;
  margin-bottom: 6px;
  margin-top: 1px;
  border: 1px solid #b5b5b5;
  border-right: 0;
  overflow: hidden;
}
.sheet-title {
  margin: 0;
  height: 45px;
  padding-left: 11px;
  font-size: 19px;
  font-weight: 400;
  line-height: 47px;
  color: #555;
}
.chart { display: block; }
.axis-hdr { font-size: 12px; fill: #808080; }
.tick { font-size: 12px; fill: #8a8a8a; }
.tabs {
  flex: 0 0 30px;
  display: flex;
  background: #e6e6e6;
  border-top: 1px solid #d5d5d5;
  box-sizing: border-box;
}
.tab {
  box-sizing: border-box;
  display: flex;
  align-items: center;
  justify-content: center;
  gap: 5px;
  border-right: 1px solid #ccc;
  white-space: nowrap;
  color: #333;
}
.tab.first { justify-content: flex-start; padding-left: 10px; color: #666; }
.tab.active { background: #fff; }
.status {
  flex: 0 0 13px;
  box-sizing: border-box;
  position: relative;
  overflow: hidden;
  background: #e6e6e6;
  border-top: 1px solid #ccc;
  display: flex;
  padding-top: 1px;
  line-height: 17px;
  color: #333;
}
.s1 { margin-left: 4px; width: 71px; }
.s2 { width: 82px; }
.status-right {
  position: absolute;
  top: 0;
  left: 1227px;
  height: 13px;
  display: flex;
  align-items: flex-start;
}
.status-nav { margin: 3px 0 0 8px; }
.status-grid { margin: 3px 0 0 8px; }
.sd { width: 1px; height: 13px; background: #ccc; }
.sd.gap1 { margin-left: 26px; }
.sd.gap2 { margin-left: 46px; }
.sd.gap3 { margin-left: 6px; }
.smart-tab {
  position: absolute;
  left: 1335px;
  top: 44px;
  width: 96px;
  height: 37px;
  box-sizing: border-box;
  border: 1px solid #e5e5e5;
  border-right: 0;
  border-bottom: 0;
  background: #fdfdfd;
  display: flex;
  align-items: center;
  gap: 6px;
  padding: 0 0 5px 11px;
  font-size: 13px;
  color: #222;
  z-index: 2;
}
.smart {
  position: absolute;
  left: 1241px;
  top: 80px;
  width: 190px;
  height: 556px;
  box-sizing: border-box;
  padding: 15px 0 0 12px;
  background: #fdfdfd;
  border-left: 1px solid #e5e5e5;
  border-bottom: 1px solid #ddd;
  box-shadow: 0 2px 2px #ddd;
}
.thumbs {
  display: grid;
  grid-template-columns: repeat(3, 56px);
  grid-auto-rows: 42px;
  gap: 4px;
}
.thumb { display: block; font-family: "Open Sans", sans-serif; }
.hint {
  margin: 0 0 0 2px;
  height: 20px;
  display: flex;
  align-items: center;
  font-size: 12px;
  color: #222;
  white-space: nowrap;
}
.h1 { margin-top: 16px; }
.h2 { margin-top: 6px; }
.h3 { margin-top: 8px; }
.tag {
  width: 48px;
  height: 20px;
  margin-left: 4px;
  border-radius: 10px;
  color: #fff;
  display: flex;
  align-items: center;
  justify-content: center;
}
.tag.blue { background: #4b8fb0; }
.tag.green { background: #00b27d; }
.cursor {
  position: absolute;
  left: 792px;
  top: 231px;
}
</style>
<style>
html, body { margin: 0; background: #fdfdfd; overflow: hidden; }
</style>
